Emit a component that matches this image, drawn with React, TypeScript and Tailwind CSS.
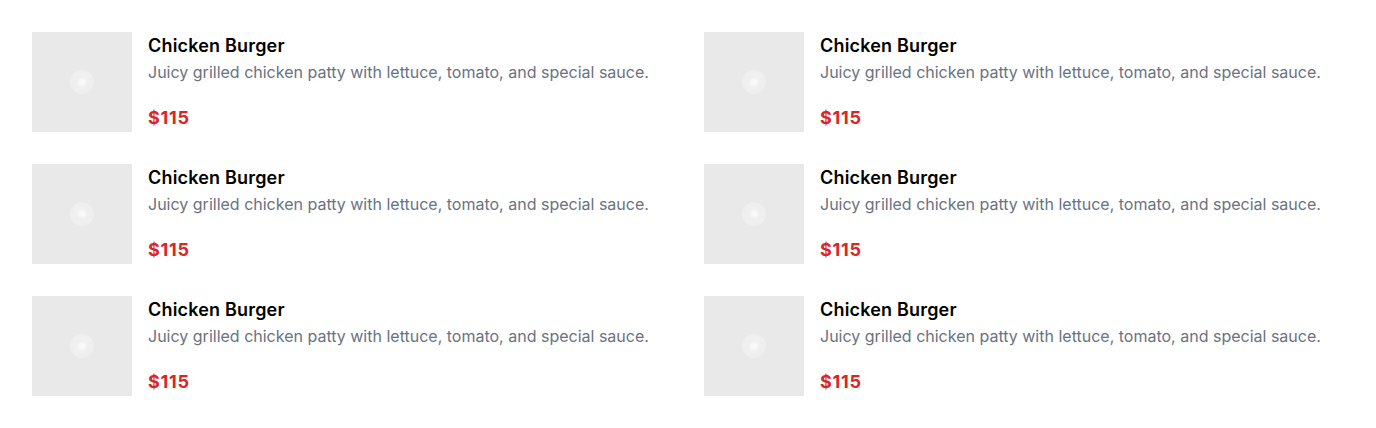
const items = Array.from({ length: 6 }, (_, i) => ({
  id: i,
  name: "Chicken Burger",
  description: "Juicy grilled chicken patty with lettuce, tomato, and special sauce.",
  price: 115,
}));

function Placeholder() {
  return (
    <div className="w-[100px] h-[100px] shrink-0 bg-[#e9e9e9] flex items-center justify-center">
      <div className="w-6 h-6 rounded-full bg-[radial-gradient(circle,#f9f9f9_0%,#f9f9f9_15%,#f0f0f0_30%,#efefef_70%,#ebebeb_100%)]" />
    </div>
  );
}

export default function App() {
  return (
    <div className="bg-white p-8 font-['Inter',sans-serif]">
      <div className="grid grid-cols-2 gap-8">
        {items.map((item) => (
          <div key={item.id} className="flex gap-4">
            <Placeholder />
            <div className="flex flex-col justify-between h-[100px]">
              <div>
                <h3 className="text-lg leading-7 font-semibold tracking-[0.01em] text-black">{item.name}</h3>
                <p className="text-base leading-6 text-gray-500">{item.description}</p>
              </div>
              <p className="text-lg leading-7 font-bold tracking-[0.04em] text-[#dc2626]">${item.price}</p>
            </div>
          </div>
        ))}
      </div>
    </div>
  );
}
